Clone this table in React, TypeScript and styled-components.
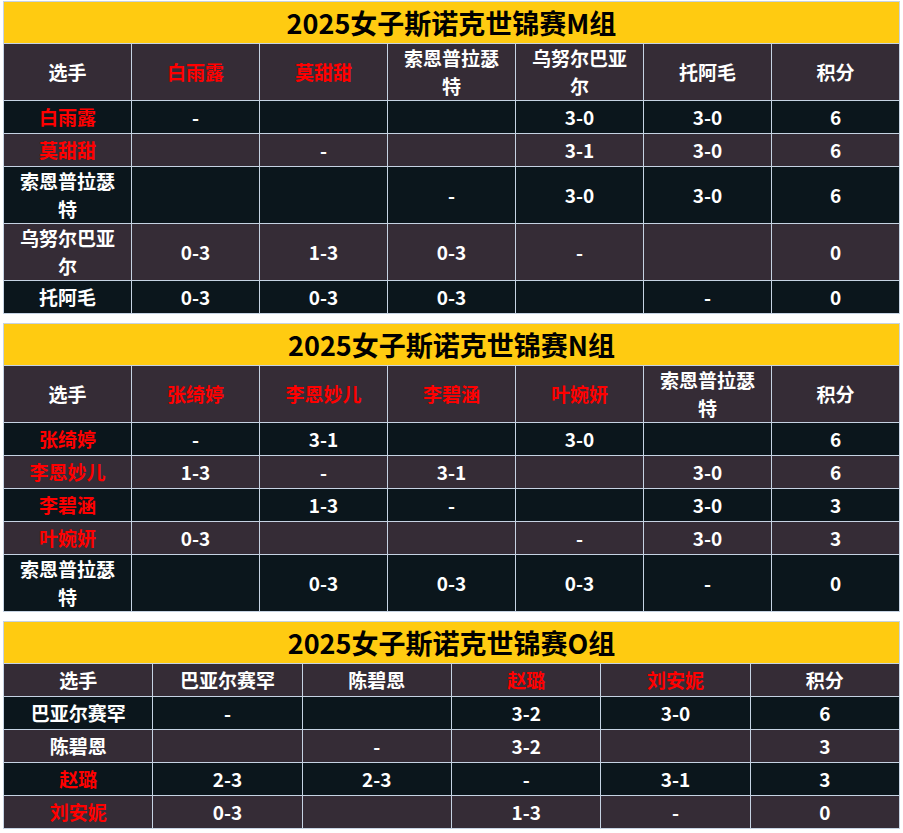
import React from "react";
import styled, { createGlobalStyle } from "styled-components";

const Global = createGlobalStyle`
  html, body { margin: 0; padding: 0; background: #ffffff; }
  body { font-family: "Noto Sans CJK SC", "Noto Sans", sans-serif; }
`;

const Page = styled.div`
  display: flex;
  flex-direction: column;
  gap: 9px;
  padding: 1px 3px 0 3px;
  width: 897px;
`;

const Table = styled.table`
  width: 897px;
  border-collapse: collapse;
  table-layout: fixed;
  border: 1px solid #c6d3e3;
  font-family: "Noto Sans CJK SC", "Noto Sans", sans-serif;
  font-weight: 700;
`;

const TitleCell = styled.td`
  background: #ffcb11;
  color: #000000;
  height: 41px;
  padding: 0;
  font-size: 27px;
  line-height: 41px;
  text-align: center;
  border: 1px solid #c6d3e3;
`;

const Row = styled.tr<{ $dark?: boolean }>`
  background: ${(p) => (p.$dark ? "#0b161c" : "#352c36")};
`;

const Cell = styled.td<{ $red?: boolean }>`
  color: ${(p) => (p.$red ? "#ff0000" : "#ffffff")};
  font-size: 19px;
  line-height: 28px;
  height: 32px;
  padding: 0 8px;
  text-align: center;
  vertical-align: middle;
  border: 1px solid #c6d3e3;
  word-break: break-all;
`;

type Player = { name: string; red?: boolean };
type Group = {
  title: string;
  players: Player[];
  results: string[][];
  points: string[];
};

const groups: Group[] = [
  {
    title: "2025女子斯诺克世锦赛M组",
    players: [
      { name: "白雨露", red: true },
      { name: "莫甜甜", red: true },
      { name: "索恩普拉瑟特" },
      { name: "乌努尔巴亚尔" },
      { name: "托阿毛" },
    ],
    results: [
      ["-", "", "", "3-0", "3-0"],
      ["", "-", "", "3-1", "3-0"],
      ["", "", "-", "3-0", "3-0"],
      ["0-3", "1-3", "0-3", "-", ""],
      ["0-3", "0-3", "0-3", "", "-"],
    ],
    points: ["6", "6", "6", "0", "0"],
  },
  {
    title: "2025女子斯诺克世锦赛N组",
    players: [
      { name: "张绮婷", red: true },
      { name: "李恩妙儿", red: true },
      { name: "李碧涵", red: true },
      { name: "叶婉妍", red: true },
      { name: "索恩普拉瑟特" },
    ],
    results: [
      ["-", "3-1", "", "3-0", ""],
      ["1-3", "-", "3-1", "", "3-0"],
      ["", "1-3", "-", "", "3-0"],
      ["0-3", "", "", "-", "3-0"],
      ["", "0-3", "0-3", "0-3", "-"],
    ],
    points: ["6", "6", "3", "3", "0"],
  },
  {
    title: "2025女子斯诺克世锦赛O组",
    players: [
      { name: "巴亚尔赛罕" },
      { name: "陈碧恩" },
      { name: "赵璐", red: true },
      { name: "刘安妮", red: true },
    ],
    results: [
      ["-", "", "3-2", "3-0"],
      ["", "-", "3-2", ""],
      ["2-3", "2-3", "-", "3-1"],
      ["0-3", "", "1-3", "-"],
    ],
    points: ["6", "3", "3", "0"],
  },
];

function GroupTable({ group }: { group: Group }) {
  const cols = group.players.length + 2;
  return (
    <Table>
      <colgroup>
        {Array.from({ length: cols }).map((_, i) => (
          <col key={i} />
        ))}
      </colgroup>
      <tbody>
        <tr>
          <TitleCell colSpan={cols}>{group.title}</TitleCell>
        </tr>
        <Row>
          <Cell>选手</Cell>
          {group.players.map((p) => (
            <Cell key={p.name} $red={p.red}>
              {p.name}
            </Cell>
          ))}
          <Cell>积分</Cell>
        </Row>
        {group.players.map((p, i) => (
          <Row key={p.name} $dark={i % 2 === 0}>
            <Cell $red={p.red}>{p.name}</Cell>
            {group.results[i].map((r, j) => (
              <Cell key={j}>{r}</Cell>
            ))}
            <Cell>{group.points[i]}</Cell>
          </Row>
        ))}
      </tbody>
    </Table>
  );
}

export default function App() {
  return (
    <>
      <Global />
      <Page>
        {groups.map((g) => (
          <GroupTable key={g.title} group={g} />
        ))}
      </Page>
    </>
  );
}
